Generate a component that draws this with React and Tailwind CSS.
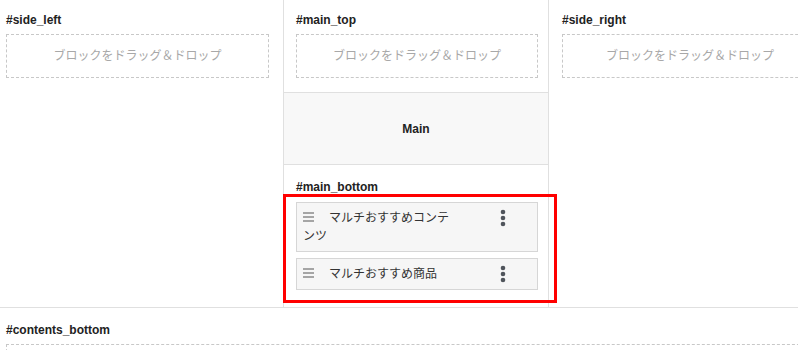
import React from 'react';

const jp = { fontFamily: '"Liberation Sans", "Noto Sans CJK JP", sans-serif' };

function Label({ children }) {
  return <div className="text-[12px] leading-[16px] font-bold text-[#222]">{children}</div>;
}

function DropZone({ className = '' }) {
  return (
    <div className={`mt-[6px] h-[44px] border border-dashed border-[#c8c8c8] flex items-center justify-center text-[12px] text-[#a8a8a8] ${className}`}>
      ブロックをドラッグ＆ドロップ
    </div>
  );
}

function Hamburger() {
  return (
    <svg width="11" height="10" viewBox="0 0 11 10" className="inline-block align-[0px] mr-[15px]">
      <path d="M0 1h11M0 5h11M0 9h11" stroke="#8a8a8a" strokeWidth="1.4" />
    </svg>
  );
}

function Kebab() {
  return (
    <svg width="6" height="18" viewBox="0 0 6 18" className="block">
      <circle cx="3" cy="3" r="2.3" fill="#50555c" />
      <circle cx="3" cy="9" r="2.3" fill="#50555c" />
      <circle cx="3" cy="15" r="2.3" fill="#50555c" />
    </svg>
  );
}

function Block({ title }) {
  return (
    <div className="flex items-start justify-between bg-[#f6f6f6] border border-[#d6d6d6] pl-[6px] pr-[31px] py-[6px]">
      <div className="w-[152px] text-[12px] leading-[18px] text-[#333]">
        <Hamburger />
        {title}
      </div>
      <Kebab />
    </div>
  );
}

export default function App() {
  return (
    <div className="relative w-full h-[350px] overflow-hidden bg-white" style={jp}>
      <div className="w-[850px]">
        <div className="flex border-b border-[#e0e0e0]">
          <div className="w-[283px] flex-none pl-[6px] pr-[14px] pt-[12px]">
            <Label>#side_left</Label>
            <DropZone />
          </div>

          <div className="w-[266px] flex-none border-x border-[#e0e0e0]">
            <div className="pl-[12px] pr-[10px] pt-[12px] pb-[14px]">
              <Label>#main_top</Label>
              <DropZone />
            </div>
            <div className="h-[73px] border-y border-[#e0e0e0] bg-[#f8f8f8] flex items-center justify-center text-[12px] font-bold text-[#222]">
              Main
            </div>
            <div className="pl-[12px] pr-[10px] pt-[14px] pb-[17px]">
              <Label>#main_bottom</Label>
              <div className="mt-[7px] flex flex-col gap-[6px]">
                <Block title="マルチおすすめコンテンツ" />
                <Block title="マルチおすすめ商品" />
              </div>
            </div>
          </div>

          <div className="w-[283px] flex-none pl-[13px] pt-[12px]">
            <Label>#side_right</Label>
            <DropZone className="w-[256px]" />
          </div>
        </div>

        <div className="pl-[6px] pt-[14px]">
          <Label>#contents_bottom</Label>
          <DropZone />
        </div>
      </div>

      <div className="absolute left-[283px] top-[194px] w-[274px] h-[109px] border-[3px] border-[#ff0000]" />
    </div>
  );
}
